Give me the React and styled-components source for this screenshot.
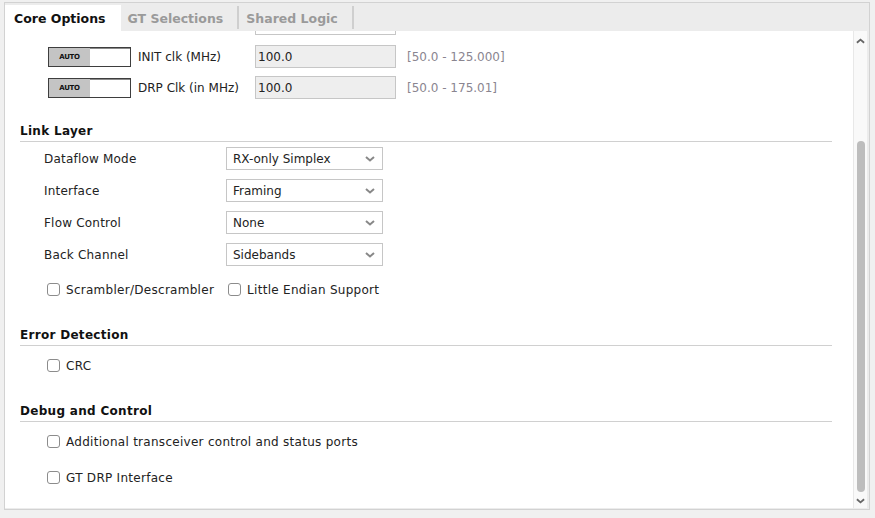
import React from 'react';
import styled, { createGlobalStyle } from 'styled-components';

const GlobalStyle = createGlobalStyle`
  html, body {
    margin: 0;
    padding: 0;
    background: #f0f0f0;
  }
  body {
    font-family: "DejaVu Sans", "Liberation Sans", sans-serif;
    font-size: 12px;
    color: #222;
  }
`;

const Frame = styled.div`
  margin: 2px 0 0 4px;
  width: 864px;
  height: 506px;
  border: 1px solid #d2d2d2;
  background: #ececec;
  display: flex;
  flex-direction: column;
`;

const TabBar = styled.div`
  height: 28px;
  padding-top: 2px;
  box-sizing: border-box;
  display: flex;
  align-items: stretch;
`;

const Tab = styled.div`
  display: flex;
  align-items: center;
  padding: ${(p) => (p.$active ? '0 15px 1px 9px' : '0 14px 1px 7px')};
  background: ${(p) => (p.$active ? '#fff' : 'transparent')};
  color: ${(p) => (p.$active ? '#111' : '#9a9a9a')};
  font-weight: bold;
  font-size: 12.5px;
  height: ${(p) => (p.$active ? '27px' : '26px')};
`;

const TabSep = styled.div`
  width: 2px;
  height: 23px;
  margin-top: 1px;
  background: #cfcfcf;
`;

const Panel = styled.div`
  flex: 1;
  margin: 0 2px 1px 0;
  display: flex;
  background: #fff;
  overflow: hidden;
`;

const Content = styled.div`
  flex: 1;
  overflow: hidden;
  padding: 0 21px 0 15px;
`;

const Scrolled = styled.div`
  margin-top: -19px;
`;

const ParamRow = styled.div`
  height: ${(p) => (p.$partial ? '29px' : '31px')};
  display: flex;
  align-items: ${(p) => (p.$partial ? 'flex-start' : 'center')};
  padding-left: 28px;
`;

const AutoToggle = styled.div`
  width: 83px;
  height: 20px;
  box-sizing: border-box;
  border: 1px solid #3e3e3e;
  box-shadow: inset 1px 1px 0 #8a8a8a;
  display: flex;
  background: #fff;
`;

const AutoPart = styled.div`
  width: 41px;
  background: #c4c4c4;
  display: flex;
  align-items: center;
  justify-content: center;
  font-size: 7px;
  font-weight: bold;
  letter-spacing: -0.3px;
  color: #111;
`;

const ParamLabel = styled.div`
  width: 117px;
  margin-left: 7px;
  white-space: nowrap;
`;

const ValueBox = styled.div`
  width: 141px;
  height: 23px;
  box-sizing: border-box;
  border: 1px solid #c6c6c6;
  background: ${(p) => (p.$blank ? '#fff' : '#eeeeee')};
  display: flex;
  align-items: center;
  padding-left: 2px;
  margin-left: ${(p) => (p.$blank ? '207px' : '0')};
`;

const Range = styled.div`
  margin-left: 11px;
  color: #8a8590;
`;

const SectionHeader = styled.div`
  margin-top: ${(p) => p.$top}px;
  line-height: 20px;
  font-weight: bold;
  letter-spacing: 0.3px;
  color: #111;
  border-bottom: 1px solid #d0d0d0;
`;

const SectionBody = styled.div`
  display: flex;
  flex-direction: column;
  gap: ${(p) => p.$gap}px;
  padding-top: ${(p) => p.$pad}px;
`;

const FieldRow = styled.div`
  height: 23px;
  display: flex;
  align-items: center;
  padding-left: 24px;
`;

const FieldLabel = styled.div`
  width: 182px;
  letter-spacing: 0.2px;
`;

const Select = styled.div`
  width: 157px;
  height: 23px;
  box-sizing: border-box;
  border: 1px solid #c6c6c6;
  background: #fff;
  display: flex;
  align-items: center;
  justify-content: space-between;
  padding: 0 7px 0 6px;
`;

const CheckRow = styled.div`
  height: 23px;
  display: flex;
  align-items: center;
  padding-left: 27px;
  margin-top: ${(p) => p.$extra || 0}px;
`;

const CheckItem = styled.label`
  display: flex;
  align-items: center;
  margin-right: 14px;
  letter-spacing: 0.28px;
`;

const Box = styled.span`
  width: 13px;
  height: 13px;
  box-sizing: border-box;
  border: 1px solid #8c8c8c;
  border-radius: 3px;
  background: #fff;
  margin-right: 6px;
`;

const ScrollBar = styled.div`
  width: 13px;
  border-left: 1px solid #e8e8e8;
  background: #f9f9f9;
  display: flex;
  flex-direction: column;
  align-items: center;
`;

const ArrowCell = styled.div`
  height: ${(p) => p.$h}px;
  display: flex;
  align-items: center;
  justify-content: center;
`;

const Track = styled.div`
  flex: 1;
  display: flex;
  flex-direction: column;
  align-items: center;
`;

const Thumb = styled.div`
  width: 8px;
  margin-top: ${(p) => p.$offset}px;
  height: ${(p) => p.$size}px;
  border-radius: 4px;
  background: #bdbdbd;
`;

const Chevron = ({ up, color = '#888', w = 10 }) => (
  <svg width={w} height="6" viewBox="0 0 10 6">
    <polyline
      points={up ? '1,5 5,1.5 9,5' : '1,1 5,4.5 9,1'}
      fill="none"
      stroke={color}
      strokeWidth="2"
    />
  </svg>
);

const Check = ({ children }) => (
  <CheckItem>
    <Box />
    {children}
  </CheckItem>
);

const clocks = [
  { label: 'INIT clk (MHz)', value: '100.0', range: '[50.0 - 125.000]' },
  { label: 'DRP Clk (in MHz)', value: '100.0', range: '[50.0 - 175.01]' },
];

const linkFields = [
  ['Dataflow Mode', 'RX-only Simplex'],
  ['Interface', 'Framing'],
  ['Flow Control', 'None'],
  ['Back Channel', 'Sidebands'],
];

export default function App() {
  return (
    <>
      <GlobalStyle />
      <Frame>
        <TabBar>
          <Tab $active>Core Options</Tab>
          <Tab>GT Selections</Tab>
          <TabSep />
          <Tab>Shared Logic</Tab>
          <TabSep />
        </TabBar>
        <Panel>
          <Content>
            <Scrolled>
              <ParamRow $partial>
                <ValueBox $blank />
              </ParamRow>
              {clocks.map((c) => (
                <ParamRow key={c.label}>
                  <AutoToggle>
                    <AutoPart>AUTO</AutoPart>
                  </AutoToggle>
                  <ParamLabel>{c.label}</ParamLabel>
                  <ValueBox>{c.value}</ValueBox>
                  <Range>{c.range}</Range>
                </ParamRow>
              ))}

              <SectionHeader $top={18}>Link Layer</SectionHeader>
              <SectionBody $gap={9} $pad={5}>
                {linkFields.map(([label, value]) => (
                  <FieldRow key={label}>
                    <FieldLabel>{label}</FieldLabel>
                    <Select>
                      <span>{value}</span>
                      <Chevron />
                    </Select>
                  </FieldRow>
                ))}
                <CheckRow $extra={3}>
                  <Check>Scrambler/Descrambler</Check>
                  <Check>Little Endian Support</Check>
                </CheckRow>
              </SectionBody>

              <SectionHeader $top={24}>Error Detection</SectionHeader>
              <SectionBody $gap={13} $pad={8}>
                <CheckRow>
                  <Check>CRC</Check>
                </CheckRow>
              </SectionBody>

              <SectionHeader $top={24}>Debug and Control</SectionHeader>
              <SectionBody $gap={13} $pad={8}>
                <CheckRow>
                  <Check>Additional transceiver control and status ports</Check>
                </CheckRow>
                <CheckRow>
                  <Check>GT DRP Interface</Check>
                </CheckRow>
              </SectionBody>
            </Scrolled>
          </Content>
          <ScrollBar>
            <ArrowCell $h={19}>
              <Chevron up color="#666" w={9} />
            </ArrowCell>
            <Track>
              <Thumb $offset={91} $size={351} />
            </Track>
            <ArrowCell $h={14}>
              <Chevron color="#666" w={9} />
            </ArrowCell>
          </ScrollBar>
        </Panel>
      </Frame>
    </>
  );
}
